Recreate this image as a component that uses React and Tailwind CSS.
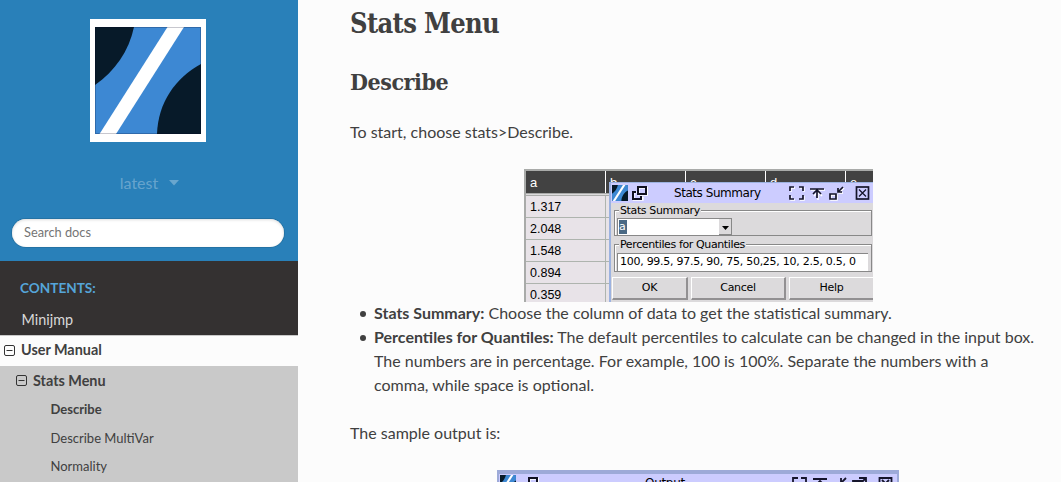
import React from "react";

function LogoArt({ className }) {
  return (
    <svg className={className} viewBox="0 0 106 107" preserveAspectRatio="none">
      <rect width="106" height="107" fill="#3d88d3" />
      <path d="M0 0H39C34 24 20 44 0 58Z" fill="#071a29" />
      <path d="M106 37C80 51 63 76 62 107H106Z" fill="#071a29" />
      <path d="M72.500 0H89L21 107H4.500Z" fill="#fff" />
      <path d="M.5 .5H105.500V106.500H.5Z" fill="none" stroke="#000020" strokeOpacity=".22" />
    </svg>
  );
}

function MinusSquare() {
  return (
    <svg className="h-[11px] w-[11px] shrink-0" viewBox="0 0 11 11" fill="none" stroke="#333">
      <rect x=".5" y=".5" width="10" height="10" rx="1.500" />
      <path d="M2.500 5.500h6" />
    </svg>
  );
}

function RestoreIcon() {
  return (
    <svg className="h-[15px] w-[16px] shrink-0" viewBox="0 0 16 15" fill="none">
      <path d="M6 1h9v7H6zM4 5.500H1V13h9v-3" stroke="#fff" strokeWidth="2" transform="translate(.7 .7)" />
      <path d="M6 1h8v7H6zM4 6H1v7h8v-3" stroke="#101020" strokeWidth="2" />
    </svg>
  );
}

function WindowIcons() {
  return (
    <svg className="h-[16px] w-[84px] shrink-0" viewBox="0 0 84 16" fill="none">
      <g stroke="#fff" strokeWidth="1.500" transform="translate(1 1)">
        <path d="M1 6V2h4M10 2h4v4M14 10v4h-4M5 14H1v-4M21 4h14M28 6v8M24 10l4-4 4 4M41 9h6v5h-6zM54 2l-5 5M49 3v4h4" />
      </g>
      <g stroke="#15152b" strokeWidth="1.700">
        <path d="M1 6V2h4M10 2h4v4M14 10v4h-4M5 14H1v-4M21 4h14M28 5v8M24 9l4-4 4 4M41 9h6v5h-6zM54 2l-5 5M49 3v4h4" />
        <rect x="67.500" y="2" width="12" height="12" />
        <path d="M70 4.500l7 7M77 4.500l-7 7" strokeWidth="1.300" />
      </g>
    </svg>
  );
}

function Sidebar() {
  return (
    <nav className="flex h-[482px] w-[298px] shrink-0 flex-col bg-[#343131] text-[#404040]">
      <div className="flex h-[261px] flex-col items-center bg-[#2980b9] pt-[19px]">
        <div className="mr-[2px] h-[123px] w-[116px] bg-white pt-[8px] pl-[5px]">
          <LogoArt className="h-[107px] w-[106px]" />
        </div>
        <div className="mt-[29px] ml-[1px] flex h-6 items-center gap-[11px] text-[16px] text-white/30">
          <span>latest</span>
          <svg className="h-[6px] w-[10px]" viewBox="0 0 10 6" fill="currentColor"><path d="M0 0h10L5 5.500z" /></svg>
        </div>
        <div className="mt-[24px] -ml-[2px] flex h-[28px] w-[272px] items-center rounded-full bg-white px-[12px] pb-px text-[12.800px] text-[#757575] shadow-[inset_0_1px_3px_#ddd,0_0_0_1px_#2472a4]">
          Search docs
        </div>
      </div>
      <div className="flex h-[74px] shrink-0 flex-col bg-[#343131]">
        <div className="mt-[11px] h-[33px] pl-[20px] text-[13.600px] leading-8 font-bold text-[#55a5d9]">CONTENTS:</div>
        <div className="pl-[21.500px] text-[14.400px] leading-8 text-[#d9d9d9]">Minijmp</div>
      </div>
      <div className="flex h-[31px] shrink-0 items-center gap-[6px] border-t border-[#c9c9c9] bg-[#fcfcfc] pb-[2px] pl-[4px] text-[14.400px] font-bold">
        <MinusSquare /><span>User Manual</span>
      </div>
      <div className="flex grow flex-col overflow-hidden bg-[#c9c9c9]">
        <div className="flex h-[29px] shrink-0 items-center gap-[6px] pl-[16px] text-[14.400px] font-bold">
          <MinusSquare /><span>Stats Menu</span>
        </div>
        <div className="h-[28.600px] shrink-0 pl-[50.500px] text-[13px] leading-[28px] font-bold">Describe</div>
        <div className="h-[28.600px] shrink-0 pl-[50.500px] text-[13px] leading-[28px]">Describe MultiVar</div>
        <div className="h-[28.600px] shrink-0 pl-[50.500px] text-[13px] leading-[28px]">Normality</div>
      </div>
    </nav>
  );
}

function Group({ label, className, children }) {
  return (
    <div className={"relative ml-[3px] w-[258px] border border-[#888] shadow-[inset_1px_1px_0_#fff] " + className}>
      <span className="absolute -top-[7px] left-[4px] bg-[#dcdadc] px-px text-[11px] leading-[13px] tracking-[-0.380px] whitespace-nowrap">{label}</span>
      {children}
    </div>
  );
}

function DialogButton({ children, className }) {
  return (
    <div className={"flex h-[23px] shrink-0 items-center justify-center border-t border-r-2 border-b-2 border-l border-t-white border-r-[#929092] border-b-[#929092] border-l-white bg-[#dcdadc] pb-px text-[11px] tracking-[-0.300px] " + className}>
      {children}
    </div>
  );
}

function StatsDialog() {
  return (
    <div className="absolute top-[11px] left-[83px] flex h-[123px] w-[266px] flex-col overflow-hidden border-t border-l-2 border-[#9cb2e0] bg-[#dcdadc] font-['DejaVu_Sans'] text-[11px] text-black">
      <div className="flex h-[20px] shrink-0 items-center bg-[#ccccff] pl-[1px]">
        <LogoArt className="h-[16px] w-[16px] shrink-0" />
        <div className="ml-[4px] flex"><RestoreIcon /></div>
        <span className="ml-[26px] w-[115px] text-[12px] tracking-[-0.450px] whitespace-nowrap">Stats Summary</span>
        <WindowIcons />
      </div>
      <Group label="Stats Summary" className="mt-[7px] h-[26px] shrink-0">
        <div className="mt-[7px] ml-[2px] flex h-[17px] w-[115px] border-t border-l border-[#888] bg-white">
          <span className="mt-px ml-px h-[14px] w-[8px] bg-[#4a6984] text-[11px] leading-[13px] text-white">a</span>
          <span className="ml-auto flex w-[13px] items-end justify-center border-r border-b border-[#888] bg-[#dcdadc] pb-[4px]">
            <svg className="h-[4px] w-[7px]" viewBox="0 0 7 4"><path d="M0 0h7L3.500 4z" /></svg>
          </span>
        </div>
      </Group>
      <Group label="Percentiles for Quantiles" className="mt-[8px] h-[28px] shrink-0">
        <div className="mt-[8px] ml-[2px] h-[18px] w-[251px] border-t border-l border-[#888] bg-white pl-[2px] text-[11px] leading-[16px] tracking-[-0.270px] whitespace-nowrap">
          100, 99.5, 97.5, 90, 75, 50,25, 10, 2.5, 0.5, 0
        </div>
      </Group>
      <div className="mt-[5px] ml-[1px] flex shrink-0 gap-[3px]">
        <DialogButton className="w-[76px]">OK</DialogButton>
        <DialogButton className="w-[95px]">Cancel</DialogButton>
        <DialogButton className="w-[86px]">Help</DialogButton>
      </div>
    </div>
  );
}

function StatsScreenshot() {
  return (
    <div className="relative ml-[174px] h-[133px] w-[349px] overflow-hidden border-t-2 border-l-2 border-[#a9aba9] bg-[#aeb4ae] font-['Liberation_Sans'] text-black">
      <div className="flex h-[22px] w-[400px] gap-px bg-white text-[13px] leading-[23px] text-white">
        {["a", "b", "c", "d", "e"].map((c) => (
          <span key={c} className="w-[79px] shrink-0 bg-[#424242] pl-[4px]">{c}</span>
        ))}
      </div>
      <div className="h-[3px] border-y border-[#a9aba9] bg-[#dcdadc]" />
      <div className="flex w-[79px] flex-col gap-px">
        {["1.317", "2.048", "1.548", "0.894", "0.359"].map((v) => (
          <div key={v} className="flex h-[21px] w-[160px] shrink-0 gap-px">
            <span className="w-[79px] bg-[#e8e3e8] pl-[4px] text-[12.500px] leading-[22px]">{v}</span>
            <span className="w-[80px] bg-[#e8e3e8]" />
          </div>
        ))}
      </div>
      <StatsDialog />
    </div>
  );
}

function OutputScreenshot() {
  return (
    <div className="ml-[147px] flex h-[12px] w-[402px] items-start overflow-hidden border-x-2 border-t-4 border-[#9daad8] bg-[#ccccff] pl-px font-['DejaVu_Sans'] text-[12px] text-black">
      <LogoArt className="mt-px h-[16px] w-[16px] shrink-0" />
      <div className="mt-[3px] ml-[7px] shrink-0"><RestoreIcon /></div>
      <span className="mt-[2px] ml-[106px] w-[147px] leading-[14px] tracking-[-0.300px]">Output</span>
      <svg className="mt-[2px] h-[16px] w-[103px] shrink-0" viewBox="0 0 103 16" fill="none" stroke="#15152b" strokeWidth="1.800">
        <path d="M1 6V2h5M9 2h5v4M21 3h14M28 5v8M24 9l4-4 4 4M54 2l-5 5M49 2v5h5M61 8v-3h9v7M67 2h7v5M74 2l-5 5M87.500 2h12v12h-12zM90 4l7 7M97 4l-7 7" />
      </svg>
    </div>
  );
}

function Item({ children }) {
  return (
    <li className="flex">
      <span className="mt-[10px] ml-[10px] mr-[8px] h-[6px] w-[6px] shrink-0 rounded-full bg-[#404040]" />
      <span>{children}</span>
    </li>
  );
}

export default function App() {
  return (
    <div className="flex h-[482px] w-[1061px] overflow-hidden bg-[#fcfcfc] font-['Lato','Liberation_Sans',sans-serif]">
      <Sidebar />
      <main className="flex w-[763px] flex-col pl-[52px] text-[16px] leading-6 text-[#404040]">
        <h1 className="mt-[4px] h-[40px] font-['Roboto_Slab','DejaVu_Serif_Condensed','DejaVu_Serif',serif] text-[27px] leading-[40px] font-bold tracking-[-0.650px] whitespace-nowrap [font-stretch:condensed]">Stats Menu</h1>
        <h2 className="mt-[21px] h-[34px] font-['Roboto_Slab','DejaVu_Serif_Condensed','DejaVu_Serif',serif] text-[23px] leading-[34px] font-bold tracking-[-0.450px] [font-stretch:condensed]">Describe</h2>
        <p className="mt-[21px]">To start, choose stats&gt;Describe.</p>
        <div className="mt-[25px]"><StatsScreenshot /></div>
        <ul className="-mt-px w-[688px]">
          <Item><b>Stats Summary:</b> Choose the column of data to get the statistical summary.</Item>
          <Item><b>Percentiles for Quantiles:</b> The default percentiles to calculate can be changed in the input box. The numbers are in percentage. For example, 100 is 100%. Separate the numbers with a comma, while space is optional.</Item>
        </ul>
        <p className="mt-[24px]">The sample output is:</p>
        <div className="mt-[25px]"><OutputScreenshot /></div>
      </main>
    </div>
  );
}
